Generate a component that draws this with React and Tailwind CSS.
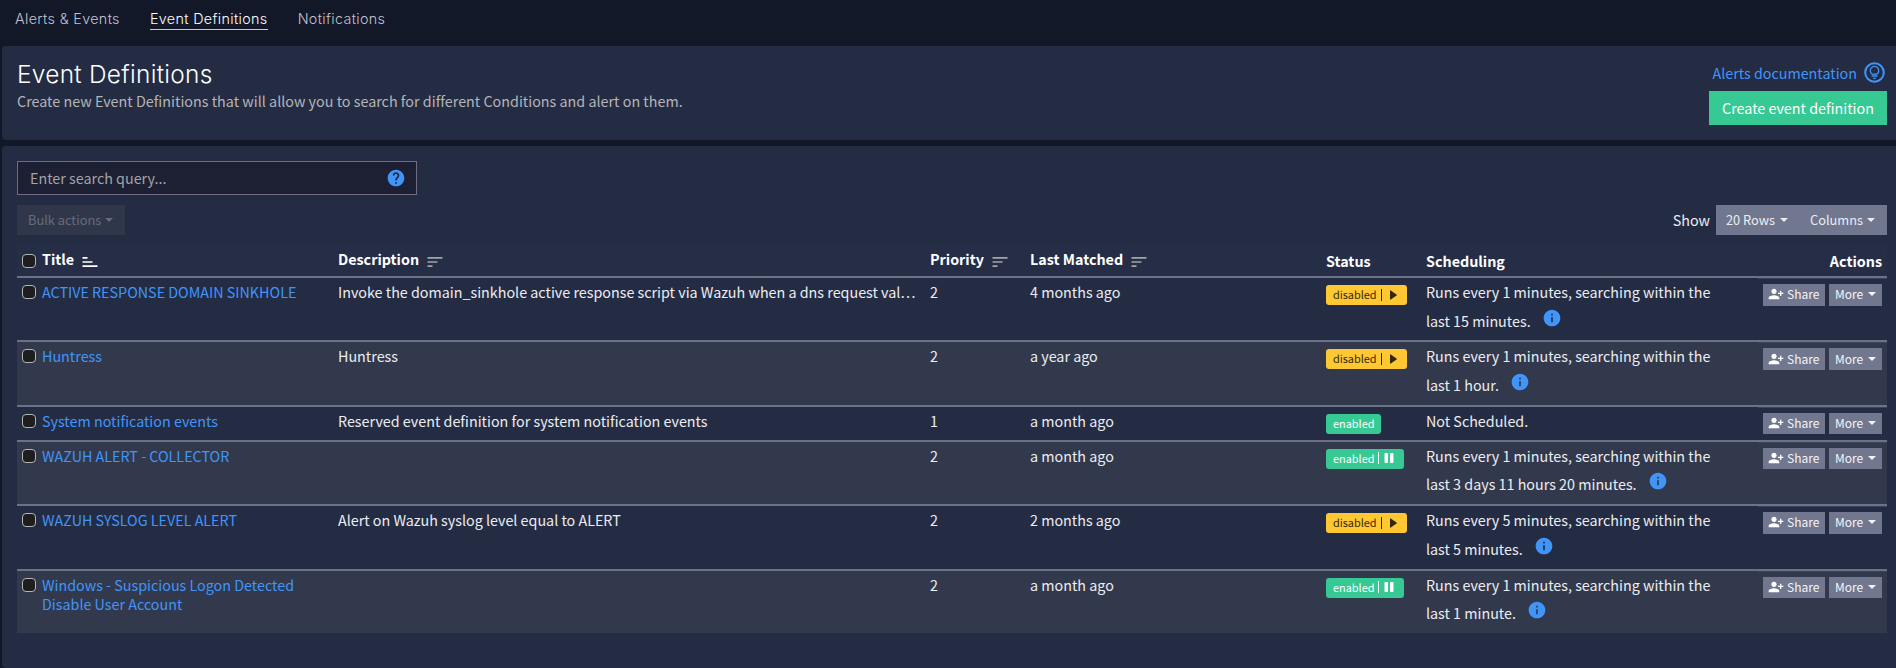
import clsx from 'clsx';
import { MdHelp, MdInfo, MdPersonAddAlt1, MdSort } from 'react-icons/md';

const TABS = ['Alerts & Events', 'Event Definitions', 'Notifications'];

const DEFINITIONS = [
  {
    title: 'ACTIVE RESPONSE DOMAIN SINKHOLE',
    description: 'Invoke the domain_sinkhole active response script via Wazuh when a dns request val…',
    priority: 2,
    lastMatched: '4 months ago',
    status: 'disabled',
    every: '1 minutes',
    within: '15 minutes',
  },
  {
    title: 'Huntress',
    description: 'Huntress',
    priority: 2,
    lastMatched: 'a year ago',
    status: 'disabled',
    every: '1 minutes',
    within: '1 hour',
  },
  {
    title: 'System notification events',
    description: 'Reserved event definition for system notification events',
    priority: 1,
    lastMatched: 'a month ago',
    status: 'enabled',
  },
  {
    title: 'WAZUH ALERT - COLLECTOR',
    description: '',
    priority: 2,
    lastMatched: 'a month ago',
    status: 'enabled',
    every: '1 minutes',
    within: '3 days 11 hours 20 minutes',
  },
  {
    title: 'WAZUH SYSLOG LEVEL ALERT',
    description: 'Alert on Wazuh syslog level equal to ALERT',
    priority: 2,
    lastMatched: '2 months ago',
    status: 'disabled',
    every: '5 minutes',
    within: '5 minutes',
  },
  {
    title: 'Windows - Suspicious Logon Detected Disable User Account',
    description: '',
    priority: 2,
    lastMatched: 'a month ago',
    status: 'enabled',
    every: '1 minutes',
    within: '1 minute',
  },
];

function Caret({ className }) {
  return <span className={clsx('inline-block shrink-0 border-x-[4px] border-t-[4px] border-x-transparent border-t-current', className)} />;
}

function Checkbox() {
  return <span className="block w-[14px] h-[14px] rounded-[4px] border border-[#b4b4b6] bg-[#1e1e1e]" />;
}

function DocsIcon() {
  return (
    <svg width="21" height="21" viewBox="0 0 21 21" fill="none" stroke="currentColor">
      <circle cx="10.5" cy="10.5" r="9.3" strokeWidth="2" />
      <path d="M8.3 12.2a4.2 4.2 0 1 1 4.4 0z" strokeWidth="1.3" strokeLinejoin="round" />
      <path d="M7.6 14h5.8M9.2 16.4h2.6" strokeWidth="1.4" />
    </svg>
  );
}

function ToggleIcon({ enabled }) {
  return (
    <svg width="16" height="12" viewBox="0 0 16 12" fill="currentColor">
      {enabled ? (
        <>
          <rect x="5.5" y="1" width="3.5" height="10" rx="1" />
          <rect x="11" y="1" width="3.5" height="10" rx="1" />
        </>
      ) : (
        <path d="M8 2q0-1 .8-.5l5.7 4q.6.5 0 1l-5.700 4q-.8.500-.8-.5z" />
      )}
    </svg>
  );
}

function SortableHeader({ label, active }) {
  return (
    <th className="h-[31px] px-[5px] pt-[4px] text-left align-top font-bold">
      <div className="flex items-start">
        {label}
        <MdSort size={20} className={clsx('ml-[6px] mt-[2.5px]', active ? '-scale-y-100 text-white' : 'text-[#a3a4a6]')} />
      </div>
    </th>
  );
}

function StatusBadge({ status, toggleable }) {
  const enabled = status === 'enabled';
  return (
    <span className={clsx('inline-flex items-center h-[20px] pl-[7px] pb-px rounded-[3px] text-[10.9px] leading-none',
      enabled ? 'bg-[#37c993] text-white' : 'bg-[#ffc833] text-[#332807]', toggleable ? 'pr-[9px]' : 'pr-[7px]')}>
      {status}
      {toggleable && (
        <>
          <span className="ml-[4px] h-[12px] w-px bg-current" />
          <ToggleIcon enabled={enabled} />
        </>
      )}
    </span>
  );
}

function DefinitionRow({ definition, striped }) {
  const { title, description, priority, lastMatched, status, every, within } = definition;
  const cell = 'px-[5px] pt-[4px] align-top border-t-2 border-[#6b7287] leading-[19px]';

  return (
    <tr className={clsx(every ? 'h-[64.4px]' : 'h-[35px]', striped && 'bg-[#32394d]')}>
      <td className="pl-[5px] pt-[7px] align-top border-t-2 border-[#6b7287]"><Checkbox /></td>
      <td className={cell}><a href="#" className="text-[#4195f9]">{title}</a></td>
      <td className={cell}><div className="whitespace-nowrap">{description}</div></td>
      <td className={cell}>{priority}</td>
      <td className={cell}>{lastMatched}</td>
      <td className="px-[5px] pt-[7px] align-top border-t-2 border-[#6b7287] leading-none">
        <StatusBadge status={status} toggleable={Boolean(every)} />
      </td>
      <td className="px-[5px] align-top border-t-2 border-[#6b7287] leading-[28.6px]">
        {every ? (
          <>
            <div>Runs every {every}, searching within the</div>
            <div className="flex">
              last {within}.
              <MdInfo size={20} className="ml-[11px] mt-px text-[#4195f9]" />
            </div>
          </>
        ) : 'Not Scheduled.'}
      </td>
      <td className="px-[5px] pt-[6px] align-top border-t-2 border-[#6b7287] shadow-[inset_0_1px_0_#3c435a]">
        <div className="flex justify-end gap-1 text-[12px] leading-none text-[#f5f5f7]">
          <button type="button" className="flex items-center h-[21.5px] w-[62px] pb-px pl-[5px] bg-[#70778f]">
            <MdPersonAddAlt1 size={16} className="mr-[3px] shrink-0 text-white" />
            Share
          </button>
          <button type="button" className="flex items-center h-[21.5px] w-[53px] pb-px pl-[6px] bg-[#70778f]">
            More
            <Caret className="ml-[5px]" />
          </button>
        </div>
      </td>
    </tr>
  );
}

export default function App() {
  return (
    <div className="h-[668px] overflow-hidden flex flex-col bg-[#131829] font-['Noto_Sans_CJK_KR',sans-serif] text-[14.32px] text-[#ecedf1]">
      <nav className="h-[46px] shrink-0 flex items-start gap-[30px] pt-[10px] pl-[15px] font-['Inter',sans-serif] font-[350] text-[14.3px] tracking-[0.36px] leading-[18px] text-[#c2c3cf]">
        {TABS.map((tab) => (
          <a key={tab} href="#" className={clsx('border-b pb-px', tab === 'Event Definitions' ? 'border-[#c9cad6] text-white' : 'border-transparent')}>
            {tab}
          </a>
        ))}
      </nav>

      <header className="ml-[2px] h-[94px] shrink-0 flex justify-between rounded-l-[4px] bg-[#242c44] pl-[15px] pr-[9px]">
        <div>
          <h1 className="mt-[13px] font-['Inter',sans-serif] font-[350] text-[24.4px] tracking-[0.3px] leading-[30px] text-white">Event Definitions</h1>
          <p className="mt-[2px] leading-[20px] tracking-[0.01px] text-[#b4b5b8]">
            Create new Event Definitions that will allow you to search for different Conditions and alert on them.
          </p>
        </div>
        <div className="flex flex-col items-end">
          <a href="#" className="mt-[16px] mr-[2px] flex items-start gap-[7px] h-[21px] leading-[22px] text-[#4195f9]">
            Alerts documentation
            <DocsIcon />
          </a>
          <button type="button" className="mt-[8px] h-[34px] w-[178px] bg-[#37c993] text-white">Create event definition</button>
        </div>
      </header>

      <main className="ml-[2px] mt-[6px] h-[522px] shrink-0 rounded-l-[4px] bg-[#242c44] pt-[15px] pl-[15px] pr-[9px]">
        <div className="flex items-center justify-between w-[400px] h-[34px] border border-[#6e6b85] bg-[#1c2032] pl-[12px] pr-[10px] text-[#a3a4a8]">
          Enter search query...
          <MdHelp size={20} className="text-[#4195f9]" />
        </div>

        <div className="mt-[10px] flex justify-between h-[30px]">
          <button type="button" className="flex items-center w-[108px] pl-[11px] bg-[#31374b] text-[12.8px] text-[#656b7c]">
            Bulk actions
            <Caret className="ml-[4px]" />
          </button>
          <div className="flex items-center">
            Show
            <div className="ml-[6px] flex items-center h-[30px] w-[171px] pl-[10px] bg-[#70778f] text-[12.8px]">
              20 Rows
              <Caret className="ml-[4.500px]" />
              <span className="ml-[22.500px]">Columns</span>
              <Caret className="ml-[4.500px]" />
            </div>
          </div>
        </div>

        <table className="mt-[10px] w-[1870px] table-fixed border-separate border-spacing-0">
          <colgroup>
            <col className="w-[20px]" />
            <col className="w-[296px]" />
            <col className="w-[592px]" />
            <col className="w-[100px]" />
            <col className="w-[296px]" />
            <col className="w-[100px]" />
            <col className="w-[337px]" />
            <col className="w-[129px]" />
          </colgroup>
          <thead>
            <tr className="h-[31px] bg-[#262e47] leading-[19px] text-white">
              <th className="pl-[5px] pt-[9px] align-top"><Checkbox /></th>
              <SortableHeader label="Title" active />
              <SortableHeader label="Description" />
              <SortableHeader label="Priority" />
              <SortableHeader label="Last Matched" />
              <th className="px-[5px] pt-[6px] text-left align-top font-bold">Status</th>
              <th className="px-[5px] pt-[6px] text-left align-top font-bold">Scheduling</th>
              <th className="px-[5px] pt-[6px] text-right align-top font-bold">Actions</th>
            </tr>
          </thead>
          <tbody>
            {DEFINITIONS.map((definition, index) => (
              <DefinitionRow key={definition.title} definition={definition} striped={index % 2 === 1} />
            ))}
          </tbody>
        </table>
      </main>
    </div>
  );
}
